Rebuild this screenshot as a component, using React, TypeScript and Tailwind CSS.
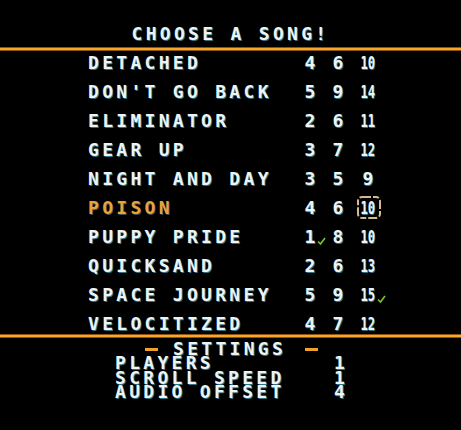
import React from "react";

type Song = {
  name: string;
  levels: number[];
  checks?: number[];
  selected?: boolean;
  boxed?: number;
};

const songs: Song[] = [
  { name: "DETACHED", levels: [4, 6, 10] },
  { name: "DON'T GO BACK", levels: [5, 9, 14] },
  { name: "ELIMINATOR", levels: [2, 6, 11] },
  { name: "GEAR UP", levels: [3, 7, 12] },
  { name: "NIGHT AND DAY", levels: [3, 5, 9] },
  { name: "POISON", levels: [4, 6, 10], selected: true, boxed: 2 },
  { name: "PUPPY PRIDE", levels: [1, 8, 10], checks: [0] },
  { name: "QUICKSAND", levels: [2, 6, 13] },
  { name: "SPACE JOURNEY", levels: [5, 9, 15], checks: [2] },
  { name: "VELOCITIZED", levels: [4, 7, 12] },
];

const settings = [
  { label: "PLAYERS", value: "1" },
  { label: "SCROLL SPEED", value: "1" },
  { label: "AUDIO OFFSET", value: "4" },
];

const Check = () => (
  <svg
    width="9"
    height="8"
    viewBox="0 0 9 8"
    className="absolute left-full bottom-[3px] ml-[2px]"
  >
    <polyline
      points="1,4.5 3.5,7 8,1"
      fill="none"
      stroke="#7cc42c"
      strokeWidth="1.6"
    />
  </svg>
);

const Level = ({ n, check }: { n: number; check?: boolean }) => (
  <span className="relative inline-block">
    {n >= 10 ? (
      <span className="inline-block tracking-normal scale-x-[0.68] mx-[-3.5px]">{n}</span>
    ) : (
      <span>{n}</span>
    )}
    {check && <Check />}
  </span>
);

const Divider = ({ className = "" }: { className?: string }) => (
  <div className={`h-[4px] w-full border-y border-[#8a5410] bg-[#f7a72a] ${className}`} />
);

export default function App() {
  return (
    <div className="w-[461px] h-[430px] overflow-hidden bg-black font-['DejaVu_Sans_Mono',monospace] font-bold text-[18px] tracking-[3.3px] text-[#eef3f3] [text-shadow:1px_1px_0_#2c7085]">
      <div className="mt-[24px] h-[20px] leading-[20px] text-center">CHOOSE A SONG!</div>
      <Divider className="mt-[3px]" />

      <div className="pt-[1px] flex flex-col gap-[7px]">
        {songs.map((s) => (
          <div key={s.name} className="flex items-center h-[22px] leading-[22px] pl-[88px]">
            <span className={`w-[208px] ${s.selected ? "text-[#eba236] [text-shadow:1px_1px_0_#3c4e58]" : ""}`}>
              {s.name}
            </span>
            {s.levels.map((n, i) => (
              <span
                key={i}
                className={`relative flex justify-center w-[28px] tracking-normal ${i === 2 ? "ml-[2px]" : ""}`}
              >
                <Level n={n} check={s.checks?.includes(i)} />
                {s.boxed === i && (
                  <svg
                    width="24"
                    height="23"
                    viewBox="0 0 24 23"
                    className="absolute left-[3px] top-[-1px]"
                  >
                    <rect
                      x="1"
                      y="1"
                      width="22"
                      height="21"
                      rx="4"
                      fill="none"
                      stroke="#d8b98c"
                      strokeWidth="2"
                      strokeDasharray="9 2 6 2"
                    />
                  </svg>
                )}
              </span>
            ))}
          </div>
        ))}
      </div>

      <Divider className="-mt-[1px]" />

      <div className="mt-[4px] h-[14px] leading-[14px] flex items-center pl-[145px]">
        <span className="w-[13px] h-[3px] bg-[#f2a128]" />
        <span className="ml-[15px]">SETTINGS</span>
        <span className="ml-[19px] w-[13px] h-[3px] bg-[#f2a128]" />
      </div>

      <div className="flex flex-col">
        {settings.map((r) => (
          <div key={r.label} className="flex items-center h-[14.5px] leading-[14.5px] pl-[115px]">
            <span className="w-[219px]">{r.label}</span>
            <span>{r.value}</span>
          </div>
        ))}
      </div>
    </div>
  );
}
